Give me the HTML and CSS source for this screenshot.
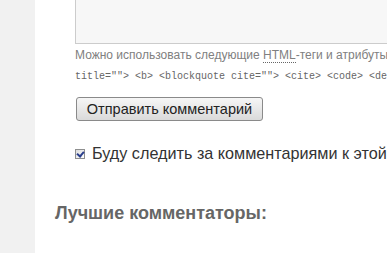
FILE: index.html
```html
<!DOCTYPE html>
<html lang="ru">
<head>
    <meta charset="UTF-8">
    <title>Комментарии</title>
    <link rel="stylesheet" href="styles.css">
</head>
<body>
    <div class="page">
        <div class="sidebar"></div>
        <div class="main">
            <form class="comment-form">
                <textarea class="comment-text"></textarea>
                <p class="allowed-tags">Можно использовать следующие <abbr title="HyperText Markup Language">HTML</abbr>-теги и атрибуты: <code>&lt;a href="" title=""&gt; &lt;abbr title=""&gt; &lt;acronym</code><br><code>title=""&gt; &lt;b&gt; &lt;blockquote cite=""&gt; &lt;cite&gt; &lt;code&gt; &lt;del datetime=""&gt;</code></p>
                <button type="submit" class="submit-btn">Отправить комментарий</button>
                <label class="subscribe"><input type="checkbox" checked> Буду следить за комментариями к этой записи</label>
            </form>
            <h3 class="top-title">Лучшие комментаторы:</h3>
        </div>
    </div>
</body>
</html>
```

FILE: styles.css
```css
body {
    margin: 0;
    padding: 0;
    font-family: "Liberation Sans", Arial, sans-serif;
    background-color: #f1f1f1;
    overflow: hidden;
}

.page {
    display: flex;
    min-height: 253px;
}

.sidebar {
    width: 35px;
    flex-shrink: 0;
    background-color: #f1f1f1;
}

.main {
    flex: 1;
    background-color: #ffffff;
    padding: 0 0 0 20px;
    min-width: 0;
    overflow: hidden;
}

.comment-form {
    padding-left: 20px;
}

.comment-text {
    display: block;
    width: 400px;
    height: 43px;
    margin: 0;
    border: 1px solid #cccccc;
    border-top: none;
    background-color: #f7f7f7;
    resize: none;
    box-sizing: content-box;
    padding: 0;
}

.allowed-tags {
    margin: 2px 0 0;
    white-space: nowrap;
    font-size: 12px;
    line-height: 18px;
    color: #808080;
}

.allowed-tags abbr {
    text-decoration: none;
    border-bottom: 1px dotted #666666;
}

.allowed-tags code {
    font-family: "Liberation Mono", "Courier New", monospace;
    font-size: 10px;
    color: #666666;
}

.submit-btn {
    display: block;
    margin: 11px 0 0 1px;
    width: 187px;
    height: 24px;
    padding: 0 0 1px;
    font-family: "Liberation Sans", Arial, sans-serif;
    font-size: 14.5px;
    color: #222222;
    border: 1px solid #8a8a8a;
    border-radius: 3px;
    background: linear-gradient(#f6f6f6, #dadada);
}

.subscribe {
    display: flex;
    align-items: center;
    gap: 7px;
    margin-top: 23px;
    white-space: nowrap;
    font-size: 16.2px;
    color: #333333;
}

.subscribe input {
    appearance: none;
    -webkit-appearance: none;
    position: relative;
    flex-shrink: 0;
    width: 10px;
    height: 10px;
    margin: 1px 0 0 0;
    border: 1px solid #8e8f8f;
    background: linear-gradient(135deg, #dcdcdc, #ffffff);
    box-sizing: border-box;
}

.subscribe input:checked::after {
    content: "";
    position: absolute;
    left: 2px;
    top: 0;
    width: 3px;
    height: 5px;
    border: solid #2a3e8c;
    border-width: 0 2px 2px 0;
    transform: rotate(40deg);
}

.top-title {
    margin: 40px 0 0;
    font-size: 18px;
    font-weight: bold;
    color: #666666;
}
```
